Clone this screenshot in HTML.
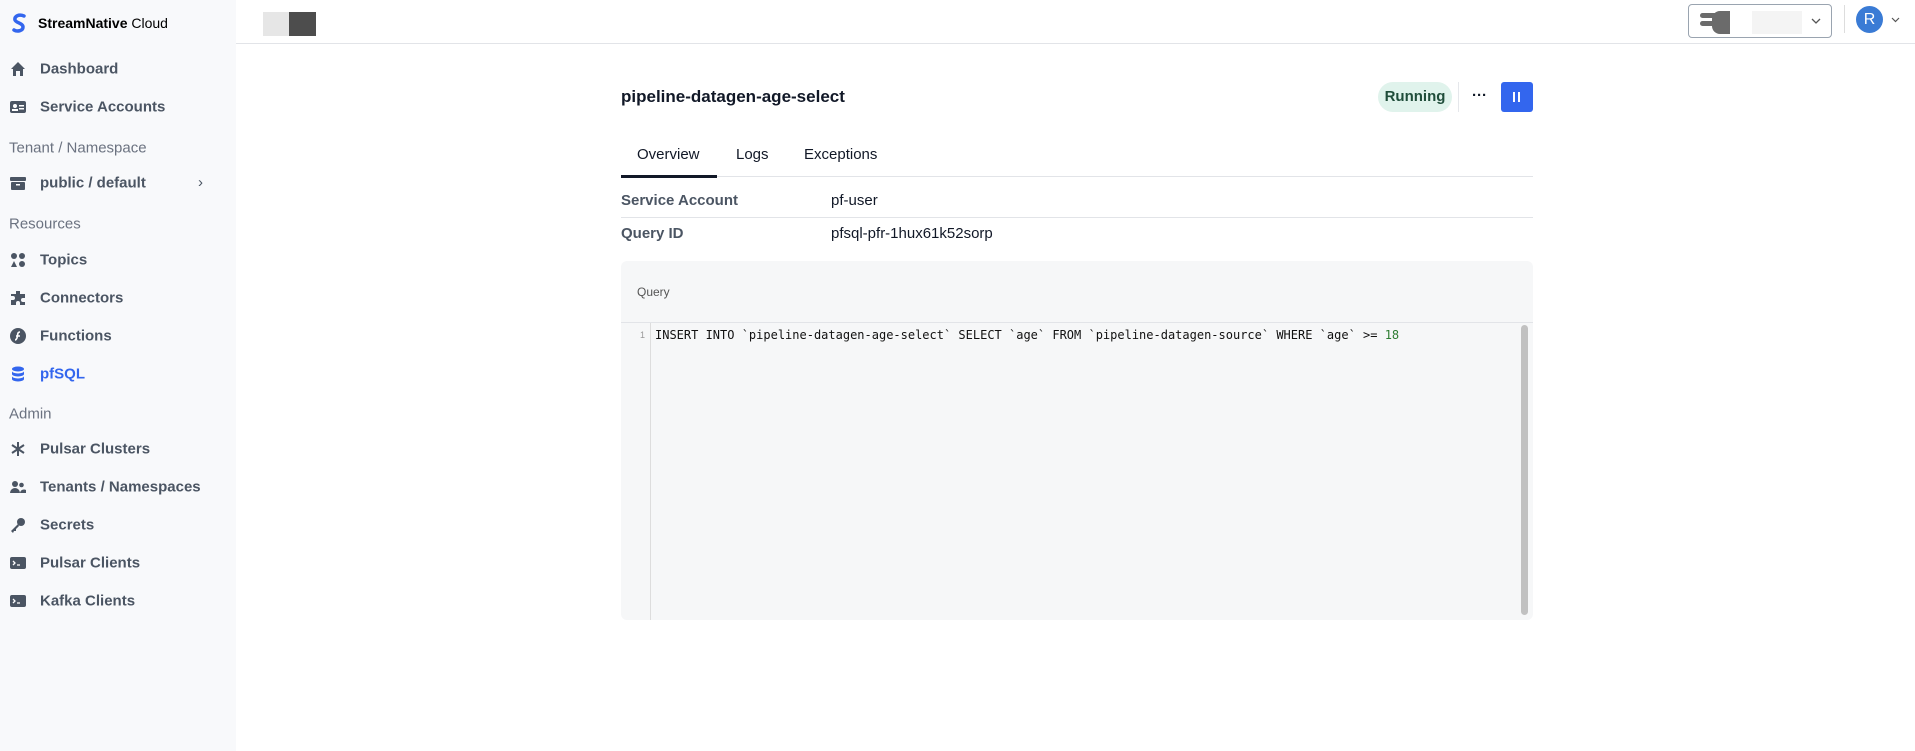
<!DOCTYPE html>
<html><head><meta charset="utf-8"><style>
*{box-sizing:border-box;margin:0;padding:0}
body{width:1915px;height:751px;font-family:"Liberation Sans",sans-serif;background:#fff;position:relative;overflow:hidden;color:#111827}
.sb{position:absolute;left:0;top:0;width:236px;height:751px;background:#f8f9fb}
.it{position:absolute;left:40px;font-size:15px;font-weight:bold;color:#4b5563;transform:translateY(-50%)}
.ic{position:absolute;left:10px;width:16px;height:16px;transform:translateY(-50%)}
.lb{position:absolute;left:9px;font-size:15px;color:#6b7280;transform:translateY(-50%)}
.a{position:absolute}
</style></head><body>
<div class="sb">
 <svg class="a" style="left:11px;top:13px" width="16" height="22" viewBox="0 0 16 22"><path d="M13 3 C8 1 3 3 4 7 C5 10 12 10 12 14 C12 18 6 19 3 17" stroke="#3366ee" stroke-width="3.5" fill="none" stroke-linecap="round"/></svg>
 <div class="a" style="left:38px;top:15px;font-size:14px;font-weight:bold;color:#000">StreamNative <span style="font-weight:normal">Cloud</span></div>
 <svg class="ic" style="top:69px" viewBox="0 0 16 16"><path d="M8 1 L15 8 L13 8 L13 15 L10 15 L10 10 L6 10 L6 15 L3 15 L3 8 L1 8Z" fill="#4b5563"/></svg><div class="it" style="top:69px">Dashboard</div>
 <svg class="ic" style="top:107px" viewBox="0 0 16 16"><rect x="0" y="2" width="16" height="12" rx="2" fill="#4b5563"/><circle cx="5" cy="7" r="2" fill="#fff"/><rect x="2" y="10" width="6" height="2" fill="#fff"/><rect x="9" y="6" width="5" height="1.5" fill="#fff"/><rect x="9" y="9" width="5" height="1.5" fill="#fff"/></svg><div class="it" style="top:107px">Service Accounts</div>
 <div class="lb" style="top:148px">Tenant / Namespace</div>
 <svg class="ic" style="top:183px" viewBox="0 0 16 16"><rect x="0" y="2" width="16" height="4" rx="1" fill="#4b5563"/><rect x="1" y="7" width="14" height="8" rx="1" fill="#4b5563"/><rect x="6" y="9" width="4" height="1.5" fill="#fff"/></svg><div class="it" style="top:183px">public / default</div>
 <div class="a" style="left:198px;top:174px;font-size:15px;color:#4b5563">›</div>
 <div class="lb" style="top:224px">Resources</div>
 <svg class="ic" style="top:260px" viewBox="0 0 16 16"><circle cx="4" cy="4" r="3" fill="#4b5563"/><circle cx="12" cy="4" r="3" fill="#4b5563"/><path d="M1 15 L4 9 L7 15Z" fill="#4b5563"/><circle cx="12" cy="12" r="3" fill="#4b5563"/></svg><div class="it" style="top:260px">Topics</div>
 <svg class="ic" style="top:298px" viewBox="0 0 16 16"><path d="M6 1 h4 v3 h5 v4 h-2 a2 2 0 0 0 0 4 h2 v3 h-5 v-2 a2 2 0 0 0 -4 0 v2 h-5 v-5 h2 a2 2 0 0 0 0 -4 h-2 v-2 h5z" fill="#4b5563"/></svg><div class="it" style="top:298px">Connectors</div>
 <svg class="ic" style="top:336px" viewBox="0 0 16 16"><circle cx="8" cy="8" r="8" fill="#4b5563"/><path d="M10 4 C7 4 8 7 7 10 C6 12 5 12 5 12 M6 8 h4" stroke="#fff" stroke-width="1.6" fill="none"/></svg><div class="it" style="top:336px">Functions</div>
 <svg class="ic" style="top:374px" viewBox="0 0 16 16"><ellipse cx="8" cy="3" rx="6" ry="2.5" fill="#3366ee"/><path d="M2 5 v3 a6 2.5 0 0 0 12 0 v-3 a6 2.5 0 0 1 -12 0z M2 10 v3 a6 2.5 0 0 0 12 0 v-3 a6 2.5 0 0 1 -12 0z" fill="#3366ee"/></svg><div class="it" style="top:374px;color:#3366ee">pfSQL</div>
 <div class="lb" style="top:414px">Admin</div>
 <svg class="ic" style="top:449px" viewBox="0 0 16 16"><path d="M8 1v14M2 4l12 8M14 4L2 12" stroke="#4b5563" stroke-width="2"/></svg><div class="it" style="top:449px">Pulsar Clusters</div>
 <svg class="ic" style="top:487px" viewBox="0 0 16 16"><circle cx="5" cy="5" r="3" fill="#4b5563"/><circle cx="11.5" cy="6" r="2.3" fill="#4b5563"/><path d="M0 14 a5 5 0 0 1 10 0z M10 14 a4 4 0 0 1 6 -3 v3z" fill="#4b5563"/></svg><div class="it" style="top:487px">Tenants / Namespaces</div>
 <svg class="ic" style="top:525px" viewBox="0 0 16 16"><circle cx="11" cy="5" r="4" fill="#4b5563"/><path d="M8 7 L1 14 L3 16 L4 14 L6 14 L6 12 L9 9z" fill="#4b5563"/></svg><div class="it" style="top:525px">Secrets</div>
 <svg class="ic" style="top:563px" viewBox="0 0 16 16"><rect x="0" y="2" width="16" height="12" rx="2" fill="#4b5563"/><path d="M3 6l2 2-2 2M7 10h3" stroke="#fff" stroke-width="1.3" fill="none"/></svg><div class="it" style="top:563px">Pulsar Clients</div>
 <svg class="ic" style="top:601px" viewBox="0 0 16 16"><rect x="0" y="2" width="16" height="12" rx="2" fill="#4b5563"/><path d="M3 6l2 2-2 2M7 10h3" stroke="#fff" stroke-width="1.3" fill="none"/></svg><div class="it" style="top:601px">Kafka Clients</div>
</div>
<div class="a" style="left:236px;top:43px;width:1679px;height:1px;background:#e2e4e8"></div>
<div class="a" style="left:263px;top:12px;width:26px;height:24px;background:#e6e6e6"></div>
<div class="a" style="left:289px;top:12px;width:27px;height:24px;background:#4d4d4d"></div>
<div class="a" style="left:1688px;top:4px;width:144px;height:34px;border:1px solid #9aa4b0;border-radius:4px"></div>
<div class="a" style="left:1700px;top:13px;width:26px;height:5px;background:#6b6b6b;border-radius:3px"></div>
<div class="a" style="left:1700px;top:21px;width:26px;height:5px;background:#6b6b6b;border-radius:3px"></div>
<div class="a" style="left:1712px;top:11px;width:18px;height:23px;background:#6b6b6b;border-radius:8px 0 0 8px"></div>
<div class="a" style="left:1752px;top:11px;width:50px;height:23px;background:#f4f4f4"></div>
<svg class="a" style="left:1811px;top:18px" width="10" height="6"><path d="M1 1l4 4 4-4" stroke="#555" fill="none" stroke-width="1.3"/></svg>
<div class="a" style="left:1844px;top:5px;width:1px;height:28px;background:#ddd"></div>
<div class="a" style="left:1856px;top:6px;width:27px;height:27px;border-radius:50%;background:#3a7bd5;color:#fff;font-size:16px;text-align:center;line-height:27px">R</div>
<svg class="a" style="left:1891px;top:17px" width="9" height="6"><path d="M1 1l3.5 3.5 3.5-3.5" stroke="#555" fill="none" stroke-width="1.2"/></svg>

<div class="a" style="left:621px;top:87px;font-size:17px;font-weight:bold">pipeline-datagen-age-select</div>
<div class="a" style="left:1378px;top:82px;width:74px;height:30px;border-radius:15px;background:#e0f3ec;color:#1f4d3a;font-size:15px;font-weight:bold;text-align:center;line-height:30px">Running</div>
<div class="a" style="left:1458px;top:82px;width:1px;height:30px;background:#e5e7eb"></div>
<div class="a" style="left:1465px;top:82px;width:29px;height:30px;text-align:center;line-height:28px;font-size:15px;font-weight:bold">···</div>
<div class="a" style="left:1501px;top:82px;width:32px;height:30px;background:#3366ee;border-radius:3px"></div>
<div class="a" style="left:1513px;top:92px;width:2px;height:10px;background:#fff"></div><div class="a" style="left:1518px;top:92px;width:2px;height:10px;background:#fff"></div>

<div class="a" style="left:637px;top:146px;font-size:15px;color:#111827">Overview</div>
<div class="a" style="left:736px;top:146px;font-size:15px;color:#111827">Logs</div>
<div class="a" style="left:804px;top:146px;font-size:15px;color:#111827">Exceptions</div>
<div class="a" style="left:621px;top:176px;width:912px;height:1px;background:#e2e4e8"></div>
<div class="a" style="left:621px;top:175px;width:96px;height:3px;background:#111827"></div>
<div class="a" style="left:621px;top:192px;font-size:15px;font-weight:bold;color:#4b5563">Service Account</div>
<div class="a" style="left:831px;top:192px;font-size:15px;color:#111827">pf-user</div>
<div class="a" style="left:621px;top:217px;width:912px;height:1px;background:#e2e4e8"></div>
<div class="a" style="left:621px;top:225px;font-size:15px;font-weight:bold;color:#4b5563">Query ID</div>
<div class="a" style="left:831px;top:225px;font-size:15px;color:#111827">pfsql-pfr-1hux61k52sorp</div>

<div class="a" style="left:621px;top:261px;width:912px;height:359px;background:#f6f7f8;border-radius:6px"></div>
<div class="a" style="left:637px;top:285px;font-size:12px;color:#555">Query</div>
<div class="a" style="left:621px;top:322px;width:912px;height:1px;background:#e2e4e8"></div>
<div class="a" style="left:650px;top:323px;width:1px;height:297px;background:#ddd"></div>
<div class="a" style="left:640px;top:330px;font-size:9px;color:#999">1</div>
<div class="a" style="left:655px;top:328px;font-family:'DejaVu Sans Mono',monospace;font-size:12px;color:#111;white-space:pre">INSERT INTO `pipeline-datagen-age-select` SELECT `age` FROM `pipeline-datagen-source` WHERE `age` &gt;= <span style="color:#2e7d32">18</span></div>
<div class="a" style="left:1521px;top:325px;width:7px;height:290px;background:#c1c1c1;border-radius:4px"></div>
</body></html>
